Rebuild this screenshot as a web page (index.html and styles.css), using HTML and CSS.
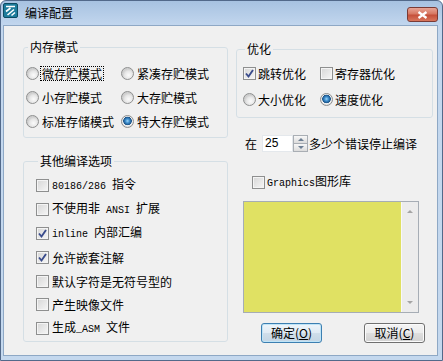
FILE: index.html
```html
<!DOCTYPE html>
<html lang="zh-CN">

<head>
	<meta charset="UTF-8">
	<title>编译配置</title>
	<link rel="stylesheet" href="styles.css">
</head>

<body>
	<div class="window">
		<div class="titlebar">
			<svg class="app-icon" viewBox="0 0 15 15">
				<rect x="0.5" y="0.5" width="14" height="14" rx="1.5" fill="#1d7c9c" stroke="#0c4b62" />
				<path d="M3 3.5h9M3 8.5l4.5-3.5M4.5 12l6.5-5.5M8.5 12.5l3.5-3" stroke="#fff" stroke-width="1.6" fill="none" />
			</svg>
			<span class="title">编译配置</span>
			<span class="close">
				<svg width="11" height="8" viewBox="0 0 11 8">
					<path d="M1.5 1l8 6M9.5 1l-8 6" stroke="#fff" stroke-width="2.2" />
				</svg>
			</span>
		</div>
		<div class="client">
			<div class="col-left">
				<fieldset class="group mem">
					<legend>内存模式</legend>
					<div class="radio-grid">
						<label class="opt"><span class="radio"></span><span class="focus">微存贮模式</span></label>
						<label class="opt"><span class="radio"></span>紧凑存贮模式</label>
						<label class="opt"><span class="radio"></span>小存贮模式</label>
						<label class="opt"><span class="radio"></span>大存贮模式</label>
						<label class="opt"><span class="radio"></span>标准存储模式</label>
						<label class="opt"><span class="radio on"></span>特大存贮模式</label>
					</div>
				</fieldset>
				<fieldset class="group other">
					<legend>其他编译选项</legend>
					<label class="opt"><span class="check"></span><span class="txt"><span class="mono">80186/286 </span>指令</span></label>
					<label class="opt"><span class="check"></span><span class="txt">不使用非<span class="mono"> ANSI </span>扩展</span></label>
					<label class="opt"><span class="check on"><svg viewBox="0 0 11 11"><path d="M2 5.5l2.5 3L9 2" /></svg></span><span class="txt"><span class="mono">inline </span>内部汇编</span></label>
					<label class="opt"><span class="check on"><svg viewBox="0 0 11 11"><path d="M2 5.5l2.5 3L9 2" /></svg></span>允许嵌套注解</label>
					<label class="opt"><span class="check"></span>默认字符是无符号型的</label>
					<label class="opt"><span class="check"></span>产生映像文件</label>
					<label class="opt"><span class="check"></span><span class="txt">生成<span class="mono">_ASM </span>文件</span></label>
				</fieldset>
			</div>
			<div class="col-right">
				<fieldset class="group opti">
					<legend>优化</legend>
					<div class="opti-grid">
						<label class="opt"><span class="check on"><svg viewBox="0 0 11 11"><path d="M2 5.5l2.5 3L9 2" /></svg></span>跳转优化</label>
						<label class="opt"><span class="check"></span>寄存器优化</label>
						<label class="opt"><span class="radio"></span>大小优化</label>
						<label class="opt"><span class="radio on"></span>速度优化</label>
					</div>
				</fieldset>
				<div class="spin-row">
					<span>在</span>
					<span class="num">25</span>
					<span class="spin">
						<span class="spin-btn"><span class="tri-up"></span></span>
						<span class="spin-btn"><span class="tri-down"></span></span>
					</span>
					<span class="spin-label">多少个错误停止编译</span>
				</div>
				<label class="opt gfx"><span class="check"></span><span class="txt"><span class="mono">Graphics</span>图形库</span></label>
				<div class="listbox">
					<div class="list-area"></div>
					<div class="vscroll">
						<span class="tri-up"></span>
						<span class="tri-down"></span>
					</div>
				</div>
				<div class="btn-row">
					<span class="btn default">确定(<u>O</u>)</span>
					<span class="btn">取消(<u>C</u>)</span>
				</div>
			</div>
		</div>
	</div>
</body>

</html>
```

FILE: styles.css
```css
* {
	margin: 0;
	padding: 0;
}

body {
	background: #fff;
	font-family: "Noto Sans CJK SC", "Liberation Sans", sans-serif;
	font-size: 12px;
	color: #000;
}

.window {
	width: 443px;
	height: 361px;
	box-sizing: border-box;
	border: 1px solid #52698a;
	border-radius: 6px 6px 0 0;
	background: linear-gradient(#a7c2e1, #c3d7ee 25px, #c4d8ee);
	display: flex;
	flex-direction: column;
	overflow: hidden;
}

.titlebar {
	height: 24px;
	display: flex;
	padding-left: 2px;
}

.app-icon {
	width: 15px;
	height: 15px;
	margin-top: 2px;
}

.title {
	margin-left: 7px;
	line-height: 24px;
}

.close {
	margin-left: auto;
	margin-right: 4px;
	margin-top: 6px;
	width: 31px;
	height: 15px;
	box-sizing: border-box;
	border: 1px solid #7a3b35;
	border-radius: 3px;
	background: linear-gradient(#e8a596, #d77862 45%, #c5503a 55%, #d8765c);
	display: flex;
	align-items: center;
	justify-content: center;
}

.client {
	flex: 1;
	margin: 0 4px 4px 2px;
	border: 1px solid #8ea8c5;
	background: #f0f0f0;
	display: flex;
	padding: 14px 0 0 19px;
}

.col-left {
	width: 205px;
}

.col-right {
	width: 197px;
	margin-left: 8px;
	margin-top: 2px;
}

fieldset.group {
	margin: 0;
	border: 1px solid #d5dfe5;
	border-radius: 3px;
	min-width: 0;
}

.group legend {
	margin-left: 2px;
	padding: 0 2px;
	line-height: 14px;
}

.opt {
	display: flex;
	align-items: center;
	white-space: nowrap;
}

.txt {
	line-height: 16px;
}

.mono {
	font-family: "Liberation Mono", monospace;
	font-size: 10px;
	white-space: pre;
}

/* radio / checkbox */
.radio {
	width: 13px;
	height: 13px;
	box-sizing: border-box;
	border-radius: 50%;
	border: 1px solid #8e8f8f;
	background: radial-gradient(circle at 60% 65%, #fbfbfb, #e6e6e6 4px, #cfcfcf 6px);
	margin-right: 3px;
	flex: none;
}

.radio.on {
	background: radial-gradient(circle at 50% 45%, #9ed8f8 0, #3f8fcf 2px, #1c5488 4px, #f2f2f2 4.6px, #dedede 6px);
}

.check {
	width: 13px;
	height: 13px;
	box-sizing: border-box;
	border: 1px solid #8e8f8f;
	background: linear-gradient(135deg, #d6d6d6, #f6f6f6);
	box-shadow: inset 0 0 0 1px #f4f4f4;
	margin-right: 3px;
	flex: none;
	display: flex;
}

.check svg {
	width: 11px;
	height: 11px;
}

.check path {
	fill: none;
	stroke: #3a4c8c;
	stroke-width: 1.9;
}

/* 内存模式 */
.mem {
	padding: 7px 0 4px 2px;
}

.radio-grid {
	display: grid;
	grid-template-columns: 95px auto;
	grid-auto-rows: 24px;
}

.focus {
	display: inline-block;
	line-height: 13px;
	outline: 1px dotted #000;
	padding: 0 1px;
	margin-left: -1px;
}

/* 其他编译选项 */
fieldset.other {
	margin-top: 16px;
	padding: 6px 0 0 12px;
}

.other .opt {
	height: 23.8px;
}

/* 优化 */
.opti {
	padding: 4px 0 5px 6px;
}

.opti-grid {
	display: grid;
	grid-template-columns: 77px auto;
	grid-auto-rows: 26px;
}

.opti-grid .check,
.opti-grid .radio {
	margin-right: 2px;
}

.spin-row {
	display: flex;
	align-items: center;
	height: 17px;
	margin-top: 17px;
	padding-left: 9px;
	white-space: nowrap;
}

.num {
	margin-left: 5px;
	width: 31px;
	height: 17px;
	box-sizing: border-box;
	background: #fff;
	border: 1px solid #e4e8ec;
	font-family: "Liberation Sans", sans-serif;
	font-size: 12px;
	line-height: 15px;
	padding-left: 2px;
}

.spin {
	width: 15px;
	height: 17px;
	display: flex;
	flex-direction: column;
}

.spin-btn {
	flex: 1;
	box-sizing: border-box;
	border: 1px solid #a9aeb4;
	background: linear-gradient(#f7f7f7, #dcdcdc);
	display: flex;
	align-items: center;
	justify-content: center;
}

.spin-btn + .spin-btn {
	border-top: none;
}

.tri-up {
	width: 0;
	height: 0;
	border-left: 3px solid transparent;
	border-right: 3px solid transparent;
	border-bottom: 3px solid #6d7f93;
}

.tri-down {
	width: 0;
	height: 0;
	border-left: 3px solid transparent;
	border-right: 3px solid transparent;
	border-top: 3px solid #6d7f93;
}

.spin-label {
	margin-left: 1px;
	flex: none;
	line-height: 17px;
}

.gfx {
	margin-top: 23px;
	padding-left: 16px;
	height: 14px;
}

.gfx .check {
	margin-right: 2px;
}

.listbox {
	margin: 12px 0 0 7px;
	width: 176px;
	height: 112px;
	box-sizing: border-box;
	border: 1px solid #a6adb5;
	display: flex;
}

.list-area {
	flex: 1;
	background: #e0e163;
}

.vscroll {
	width: 17px;
	background: #ececec;
	border-left: 1px solid #f8f8f8;
	box-sizing: border-box;
	display: flex;
	flex-direction: column;
	justify-content: space-between;
	align-items: center;
	padding: 8px 0;
}

.vscroll .tri-up {
	border-bottom-color: #a4a4a4;
}

.vscroll .tri-down {
	border-top-color: #a4a4a4;
}

.btn-row {
	display: flex;
	margin-top: 10px;
	padding-left: 25px;
	gap: 42px;
}

.btn {
	width: 61px;
	height: 20px;
	box-sizing: border-box;
	border: 1px solid #707070;
	border-radius: 3px;
	background: linear-gradient(#f4f4f4, #ececec 48%, #dedede 52%, #d2d2d2);
	box-shadow: inset 0 0 0 1px #fbfbfb;
	text-align: center;
	line-height: 18px;
}

.btn.default {
	border-color: #3c7fb1;
	background: linear-gradient(#eef5fa, #e0ebf4 48%, #cfdeea 52%, #c3d5e4);
	box-shadow: inset 0 0 0 1px #bfe4f7;
}

.btn u {
	text-decoration: underline;
}
```
